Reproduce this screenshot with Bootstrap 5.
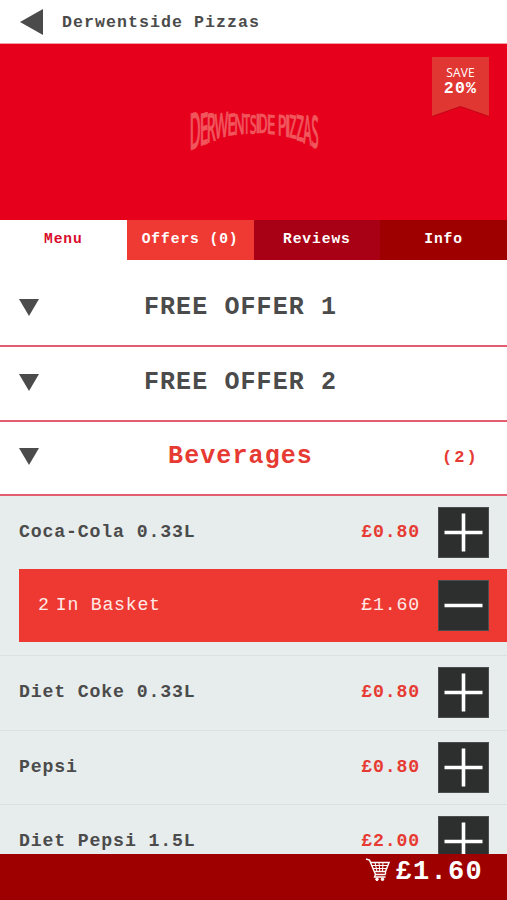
<!DOCTYPE html>
<html lang="en">
<head>
<meta charset="utf-8">
<meta name="viewport" content="width=device-width, initial-scale=1">
<title>Derwentside Pizzas</title>
<link href="https://cdn.jsdelivr.net/npm/bootstrap@5.3.0/dist/css/bootstrap.min.css" rel="stylesheet">
<style>
  body { font-family: "Liberation Mono", monospace; color: #4b4b4b; background: #fff; letter-spacing: 1px; }
  .app { height: 900px; }
  .topbar { height: 44px; border-bottom: 1px solid #f0a0a4; padding-left: 20px; gap: 19px; }
  .topbar h1 { font-size: 16.6px; letter-spacing: 1.04px; line-height: 42px; padding-top: 2px; }
  .hero { height: 176px; background: #e6001c; padding-top: 36px; }
  .ribbon { top: 13px; right: 18px; width: 57px; height: 61px; padding-top: 9px; }
  .ribbon svg { inset: 0; }
  .save { font: 12px/14px "Open Sans", sans-serif; letter-spacing: .1px; }
  .pct { font-size: 16.5px; line-height: 17px; letter-spacing: 1.3px; }
  .tabs .nav-link { height: 40px; padding: 0; line-height: 38px; font-size: 14.6px; letter-spacing: .93px; font-weight: 700; color: #fff; border-radius: 0; }
  .tabs .t-menu { color: #d90a2c; background: #fff; }
  .tabs .t-offers { background: #ef3a33; }
  .tabs .t-reviews { background: #a80014; }
  .tabs .t-info { background: #9e0000; }
  .sections { padding-top: 12.5px; }
  .section-row { height: 74.5px; padding: 0 20px 2px 19px; border-bottom: 2px solid #e25d6f; }
  .section-row h2 { font-size: 25px; letter-spacing: 1.1px; line-height: 30px; padding-top: 1px; }
  .side { width: 45px; }
  .red { color: #e63a33; }
  .count { font-size: 17px; letter-spacing: 2px; padding-top: 2px; }
  .goods { background: #e7ecec; }
  .item { height: 74.5px; padding: 0 18px 0 19px; font-size: 18.2px; letter-spacing: .85px; font-weight: 700; border-top: 1px solid #dbe1e1; }
  .item.first { height: 73px; border: 0; }
  .basket { height: 73px; margin: 0 0 13px 19px; padding: 0 18px 0 19px; background: #ee3932; color: #ffe9e6; font-size: 18.2px; letter-spacing: .85px; }
  .in-basket { padding-left: 6px; letter-spacing: .75px; }
  .step { width: 51px; height: 51px; background: #2d2e2e; margin-left: 18px; padding: 0; border: 1px solid #4c4e4e; border-radius: 0; }
  .step svg { display: block; }
  .total { height: 46px; background: #9e0000; padding: 0 24px 0 0; font-size: 27px; letter-spacing: 1.3px; line-height: 36px; }
</style>
</head>
<body>
<div class="app d-flex flex-column overflow-hidden">
  <header class="topbar d-flex align-items-center flex-shrink-0">
    <svg width="23" height="26" viewBox="0 0 23 26"><path d="M0 13 23 0V26Z" fill="#4b4b4b"/></svg>
    <h1 class="m-0 fw-bold">Derwentside Pizzas</h1>
  </header>

  <section class="hero position-relative flex-shrink-0">
    <svg class="d-block mx-auto overflow-visible" id="brand" width="135" height="100" viewBox="186 79 135 100" font-family="Open Sans, sans-serif" font-size="14" font-weight="600" fill="#f0565c" stroke="#f0565c" stroke-width=".25"></svg>
    <div class="ribbon position-absolute text-center text-white">
      <svg class="position-absolute" width="57" height="61" viewBox="0 0 57 61"><path d="M0 60V0H57V60L28.5 50Z" fill="#9e0d10" opacity=".5"/><path d="M0 59V0H57V59L28.5 49Z" fill="#e13732"/></svg>
      <div class="save position-relative">SAVE</div>
      <div class="pct position-relative fw-bold">20%</div>
    </div>
  </section>

  <nav class="tabs nav nav-justified flex-nowrap flex-shrink-0">
    <a class="nav-link w-25 t-menu" href="#">Menu</a>
    <a class="nav-link w-25 t-offers" href="#">Offers (0)</a>
    <a class="nav-link w-25 t-reviews" href="#">Reviews</a>
    <a class="nav-link w-25 t-info" href="#">Info</a>
  </nav>

  <main class="flex-grow-1 overflow-hidden">
    <div class="sections">
      <div class="section-row d-flex align-items-center">
        <svg width="20" height="17" viewBox="0 0 20 17"><path d="M0 0H20L10 17Z" fill="#4b4b4b"/></svg>
        <h2 class="flex-grow-1 text-center fw-bold m-0">FREE OFFER 1</h2><span class="side"></span>
      </div>
      <div class="section-row d-flex align-items-center">
        <svg width="20" height="17" viewBox="0 0 20 17"><path d="M0 0H20L10 17Z" fill="#4b4b4b"/></svg>
        <h2 class="flex-grow-1 text-center fw-bold m-0">FREE OFFER 2</h2><span class="side"></span>
      </div>
      <div class="section-row d-flex align-items-center">
        <svg width="20" height="17" viewBox="0 0 20 17"><path d="M0 0H20L10 17Z" fill="#4b4b4b"/></svg>
        <h2 class="flex-grow-1 text-center fw-bold m-0 red">Beverages</h2><span class="side count red fw-bold text-nowrap">(2)</span>
      </div>
    </div>
    <div class="goods">
      <div class="item first d-flex align-items-center">
        <span>Coca-Cola 0.33L</span><span class="ms-auto red">£0.80</span>
        <button class="step btn" aria-label="Add"><svg width="49" height="49" viewBox="0 0 49 49"><path d="M5.500 24.500H43.500M24.500 5.500V43.500" stroke="#fff" stroke-width="3.600"/></svg></button>
      </div>
      <div class="basket d-flex align-items-center">
        <span>2</span><span class="in-basket">In Basket</span><span class="ms-auto">£1.60</span>
        <button class="step btn" aria-label="Remove"><svg width="49" height="49" viewBox="0 0 49 49"><path d="M5.500 24.500H43.500" stroke="#fff" stroke-width="3.600"/></svg></button>
      </div>
      <div class="item d-flex align-items-center">
        <span>Diet Coke 0.33L</span><span class="ms-auto red">£0.80</span>
        <button class="step btn" aria-label="Add"><svg width="49" height="49" viewBox="0 0 49 49"><path d="M5.500 24.500H43.500M24.500 5.500V43.500" stroke="#fff" stroke-width="3.600"/></svg></button>
      </div>
      <div class="item d-flex align-items-center">
        <span>Pepsi</span><span class="ms-auto red">£0.80</span>
        <button class="step btn" aria-label="Add"><svg width="49" height="49" viewBox="0 0 49 49"><path d="M5.500 24.500H43.500M24.500 5.500V43.500" stroke="#fff" stroke-width="3.600"/></svg></button>
      </div>
      <div class="item d-flex align-items-center">
        <span>Diet Pepsi 1.5L</span><span class="ms-auto red">£2.00</span>
        <button class="step btn" aria-label="Add"><svg width="49" height="49" viewBox="0 0 49 49"><path d="M5.500 24.500H43.500M24.500 5.500V43.500" stroke="#fff" stroke-width="3.600"/></svg></button>
      </div>
    </div>
  </main>

  <footer class="total d-flex justify-content-end align-items-start flex-shrink-0 text-white fw-bold">
    <svg class="mt-1 me-1" width="26" height="24" viewBox="0 0 26 24" fill="none" stroke="#fff"><path d="M1 1 4.500 2 10.500 16.500H20.500" stroke-width="1.500"/><path d="M5.500 4.500H24L20.500 13.500H9.200" stroke-width="1.500"/><path d="M6.500 7.500H23M7.800 10.500H22M10 4.500 12 13.500M14 4.500 14.800 13.500M18 4.500 17.500 13.500" stroke-width="1"/><path d="M20.500 13.500V16.500M10.500 16.500 9.500 19H20.500" stroke-width="1.300"/><circle cx="12" cy="21.300" r="1.300" fill="#fff"/><circle cx="17.500" cy="21.300" r="1.300" fill="#fff"/></svg>
    <span>£1.60</span>
  </footer>
</div>
<script src="https://cdn.jsdelivr.net/npm/bootstrap@5.3.0/dist/js/bootstrap.bundle.min.js"></script>
<script>
  // Arched brand lettering: [letter, left, right, baseline, baseline slope]
  const letters = [
    ['D',191,200,149.5,-.35],['E',201,207.5,145,-.3],['R',208,216,142,-.28],['W',215,228,138,-.2],
    ['E',228.500,235,135,-.15],['N',235.500,243.5,134,-.1],['T',243.500,250,133,-.05],['S',250,256.500,132.500,0],
    ['I',257,259,132.300,0],['D',259.500,267,132.300,0],['E',268,274.500,132.700,.08],['P',279,286,134,.12],
    ['I',286.500,289,135.500,.15],['Z',289.500,296.500,136.500,.2],['Z',296.500,304,139,.25],['A',303.500,311.500,142,.3],['S',311.500,318.500,145.500,.35]
  ];
  const brand = document.getElementById('brand');
  // Share of the advance taken by the glyph's left bearing and by its ink
  const bearings = { D: [.13, .79], E: [.17, .71], R: [.15, .85], N: [.13, .74], P: [.16, .77], I: [.33, .34] };
  for (const [ch, left, right, base, slope] of letters) {
    const t = document.createElementNS('http://www.w3.org/2000/svg', 'text');
    t.textContent = ch;
    t.style.letterSpacing = '0';
    brand.append(t);
    const [lead, ink] = bearings[ch] || [.03, .94];
    const advance = (right - left) / ink;
    const sx = advance / t.getComputedTextLength();
    const sy = (base - 113.5) / 10;
    t.setAttribute('transform', `matrix(${sx} ${slope * sx} 0 ${sy} ${left - lead * advance} ${base})`);
  }
</script>
</body>
</html>
